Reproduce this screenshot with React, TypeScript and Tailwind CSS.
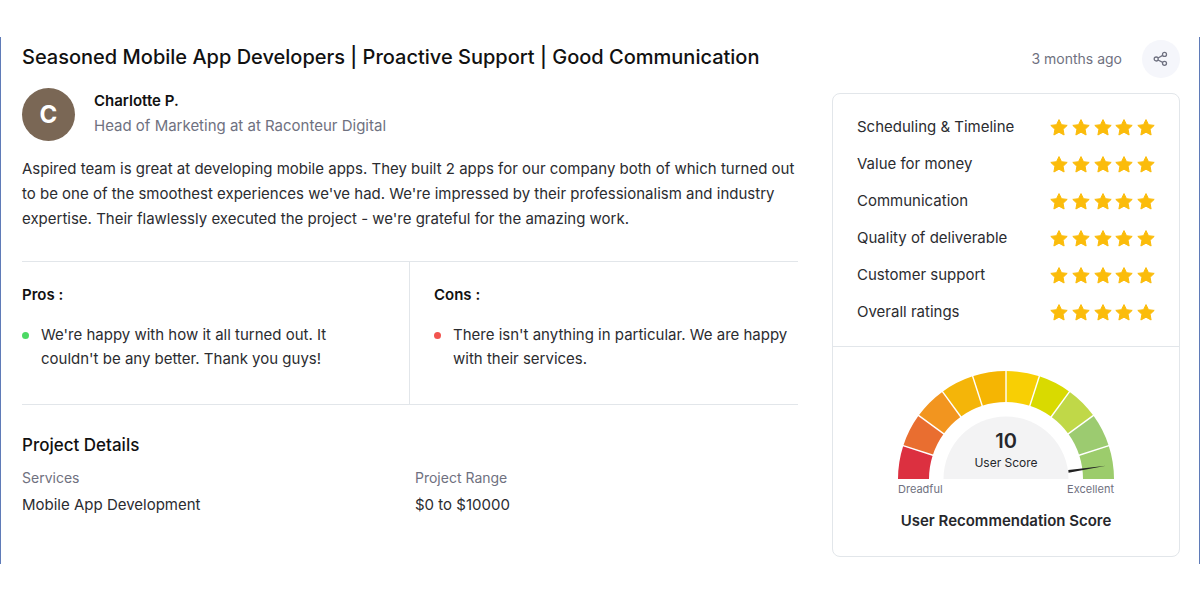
interface FeedbackListProps {
    title: string
    items: string[]
    dotClass: string
    className?: string
}

const ratings = [
    { label: 'Scheduling & Timeline', value: 5 },
    { label: 'Value for money', value: 5 },
    { label: 'Communication', value: 5 },
    { label: 'Quality of deliverable', value: 5 },
    { label: 'Customer support', value: 5 },
    { label: 'Overall ratings', value: 5 },
]

const gaugeColors = [
    '#dc3040', '#e96e30', '#f2951f', '#f4b509', '#f5b503',
    '#f8cf04', '#d9da00', '#c0d848', '#9ccb70', '#9ccc6c',
]

// point on the half circle, 0 = left end, 180 = right end
function polar(radius: number, deg: number) {
    const rad = (deg * Math.PI) / 180
    return `${(108 - radius * Math.cos(rad)).toFixed(2)} ${(108 - radius * Math.sin(rad)).toFixed(2)}`
}

function Gauge() {
    const step = 180 / gaugeColors.length

    return (
        <svg viewBox="0 0 216 108" className="block w-[216px] h-[108px]" aria-hidden="true">
            {gaugeColors.map((color, index) => {
                const from = index * step
                const to = from + step
                return (
                    <path
                        key={index}
                        d={`M${polar(108, from)} A108 108 0 0 1 ${polar(108, to)} L${polar(77, to)} A77 77 0 0 0 ${polar(77, from)} Z`}
                        fill={color}
                    />
                )
            })}
            {gaugeColors.slice(1).map((_, index) => (
                <path
                    key={index}
                    d={`M${polar(76, (index + 1) * step)} L${polar(109, (index + 1) * step)}`}
                    stroke="#fff"
                    strokeWidth="1.4"
                />
            ))}
            <path d="M45.5 108 A62.5 62.5 0 0 1 170.5 108 Z" fill="#f3f3f4" />
            <path d="M170.3 99 L208 94.8 L170.6 101.7 Z" fill="#222" />
        </svg>
    )
}

function ShareIcon() {
    return (
        <svg viewBox="0 0 16 16" className="w-4 h-4" fill="none" stroke="#6f7180" strokeWidth="1.3" aria-hidden="true">
            <circle cx="3.2" cy="8" r="2" />
            <circle cx="11.5" cy="3.4" r="2" />
            <circle cx="11.5" cy="12.3" r="2" />
            <path d="M5 7 L9.7 4.4 M5 9 L9.7 11.4" />
        </svg>
    )
}

function StarIcon() {
    return (
        <svg viewBox="0 0 18 18" className="w-[18px] h-[18px]" fill="#fbbc0b" stroke="#fbbc0b" strokeWidth="1" strokeLinejoin="round" aria-hidden="true">
            <path d="M9 0.6 L11.5 5.7 L17.2 6.4 L13.1 10.3 L14.1 16 L9 13.2 L3.9 16 L4.9 10.3 L0.8 6.4 L6.5 5.7 Z" />
        </svg>
    )
}

function FeedbackList({ title, items, dotClass, className = '' }: FeedbackListProps) {
    return (
        <div className={`pt-[21px] pb-[33px] ${className}`}>
            <h3 className="text-[15px] leading-6 font-semibold text-[#111]">{title}</h3>
            <ul className="mt-4">
                {items.map((item) => (
                    <li key={item} className="flex gap-3 leading-6">
                        <span className={`mt-[9px] w-[7px] h-[7px] shrink-0 rounded-full ${dotClass}`} />
                        {item}
                    </li>
                ))}
            </ul>
        </div>
    )
}

function RatingCard() {
    return (
        <section className="mt-[15px] rounded-lg border border-[#e2e6ea]">
            <dl className="px-6 pt-[15px] pb-[15px]">
                {ratings.map((rating) => (
                    <div key={rating.label} className="flex h-[37px] items-center justify-between">
                        <dt>{rating.label}</dt>
                        <dd className="flex w-[105px] justify-between" aria-label={`${rating.value} out of 5`}>
                            {Array.from({ length: rating.value }, (_, i) => (
                                <StarIcon key={i} />
                            ))}
                        </dd>
                    </div>
                ))}
            </dl>
            <div className="flex flex-col items-center border-t border-[#e2e6ea] pt-6 pb-[23px]">
                <div className="relative">
                    <Gauge />
                    <div className="absolute inset-x-0 bottom-[6px] text-center text-[#26272b]">
                        <div className="text-xl leading-6 font-semibold">10</div>
                        <div className="text-xs leading-5">User Score</div>
                    </div>
                </div>
                <div className="mt-[2px] flex w-[216px] justify-between text-[11px] leading-4 text-[#6f7180]">
                    <span>Dreadful</span>
                    <span>Excellent</span>
                </div>
                <h3 className="mt-3 text-[15px] leading-6 font-semibold text-[#26272b]">User Recommendation Score</h3>
            </div>
        </section>
    )
}

export default function App() {
    return (
        <div className="min-h-screen bg-white py-[37px] font-['Inter',sans-serif] text-[15px] text-[#2b2c30]">
            <main className="flex gap-[34px] border-x border-[#5f7bb8] pl-[21px] pr-[19px] pt-[3px] pb-[7px]">
                <article className="min-w-0 flex-1 pt-px">
                    <h1 className="text-xl leading-8 font-medium text-[#111]">
                        Seasoned Mobile App Developers | Proactive Support | Good Communication
                    </h1>
                    <div className="mt-[15px] flex gap-[19px]">
                        <div className="flex w-[53px] h-[53px] shrink-0 items-center justify-center rounded-full bg-[#7a6755] text-2xl font-bold text-white">
                            C
                        </div>
                        <div className="leading-[25px]">
                            <div className="font-semibold text-[#111]">Charlotte P.</div>
                            <div className="text-[#6f7180]">Head of Marketing at at Raconteur Digital</div>
                        </div>
                    </div>
                    <p className="mt-[15px] leading-[25px]">
                        Aspired team is great at developing mobile apps. They built 2 apps for our company both of which turned out
                        to be one of the smoothest experiences we've had. We're impressed by their professionalism and industry
                        expertise. Their flawlessly executed the project - we're grateful for the amazing work.
                    </p>
                    <div className="mt-[30px] grid grid-cols-2 border-y border-[#e2e6ea]">
                        <FeedbackList
                            title="Pros :"
                            items={["We're happy with how it all turned out. It couldn't be any better. Thank you guys!"]}
                            dotClass="bg-[#4cd964]"
                            className="border-r border-[#e2e6ea] pr-14"
                        />
                        <FeedbackList
                            title="Cons :"
                            items={["There isn't anything in particular. We are happy with their services."]}
                            dotClass="bg-[#f2544f]"
                            className="pl-6"
                        />
                    </div>
                    <h2 className="mt-[26px] text-[17px] leading-7 font-medium text-[#111]">Project Details</h2>
                    <dl className="mt-[9px] grid grid-cols-2 gap-[10px]">
                        <div>
                            <dt className="text-sm text-[#6f7180]">Services</dt>
                            <dd className="mt-[5px] leading-6">Mobile App Development</dd>
                        </div>
                        <div>
                            <dt className="text-sm text-[#6f7180]">Project Range</dt>
                            <dd className="mt-[5px] leading-6">$0 to $10000</dd>
                        </div>
                    </dl>
                </article>
                <aside className="w-[348px] shrink-0">
                    <div className="flex items-center justify-end gap-5 text-sm text-[#6f7180]">
                        <time>3 months ago</time>
                        <button type="button" aria-label="Share" className="flex w-[38px] h-[38px] items-center justify-center rounded-full bg-[#f5f6fb]">
                            <ShareIcon />
                        </button>
                    </div>
                    <RatingCard />
                </aside>
            </main>
        </div>
    )
}
